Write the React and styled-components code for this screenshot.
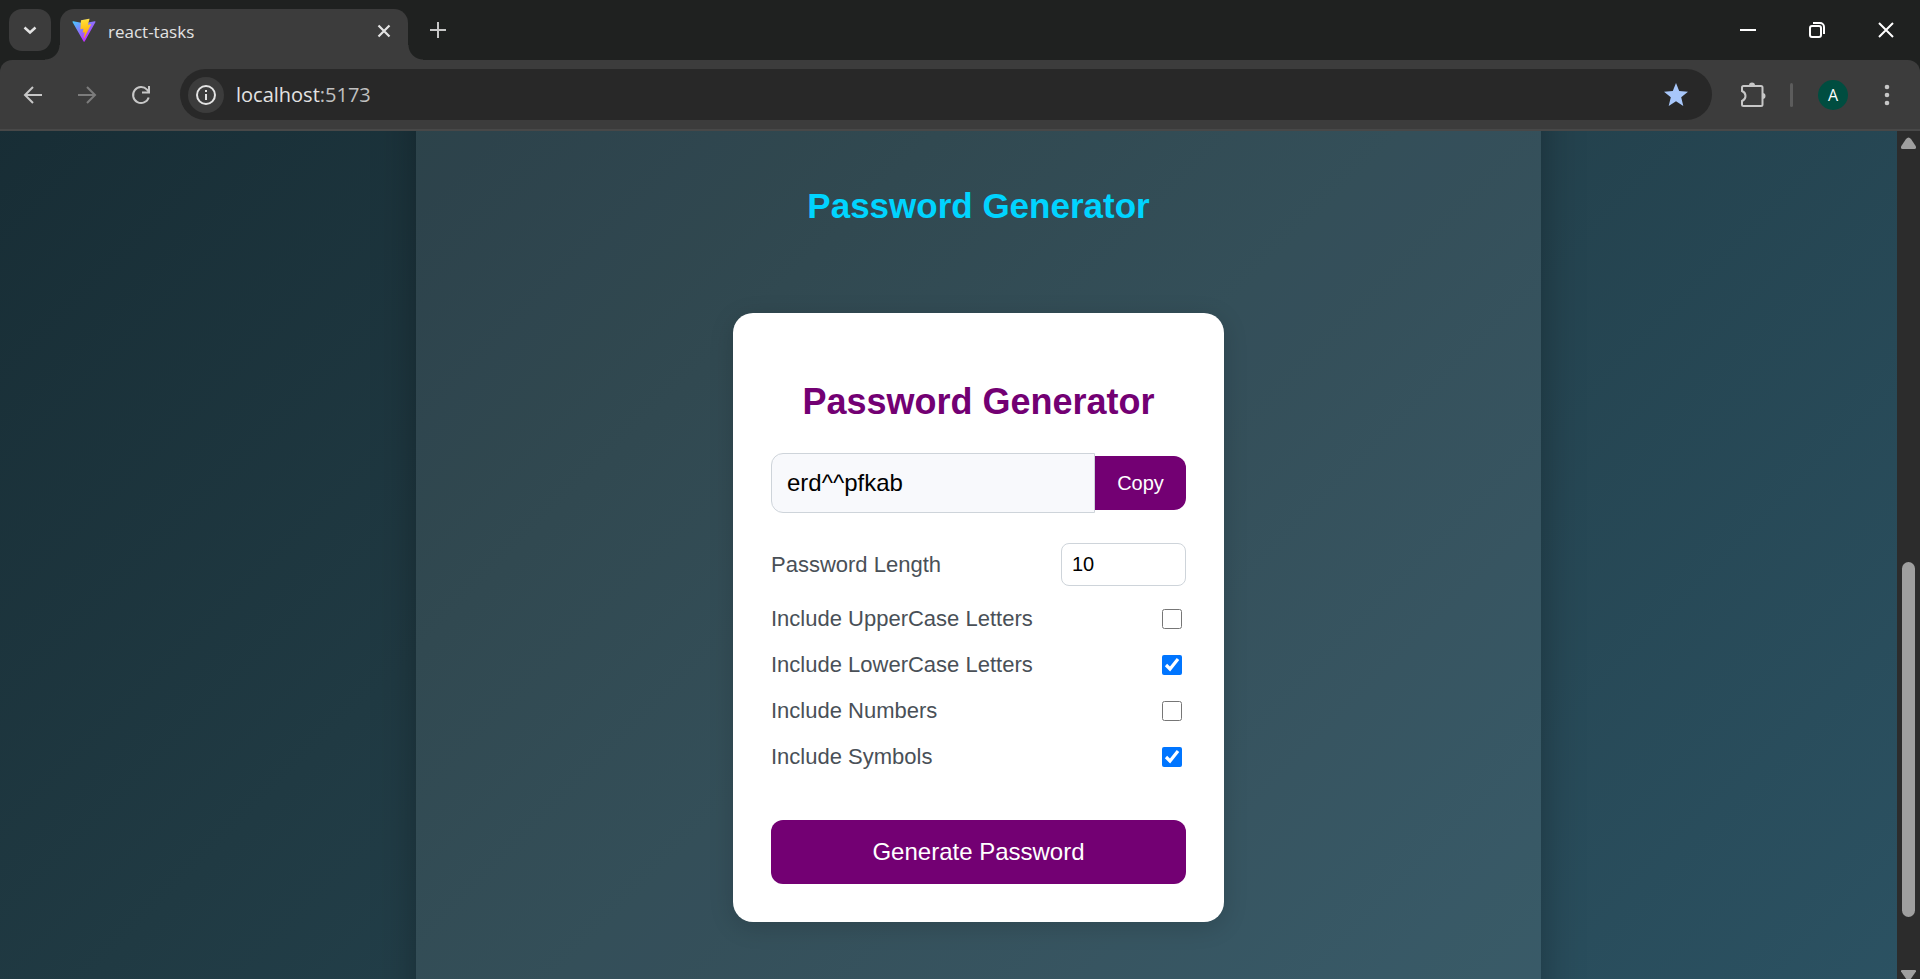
import React, { useState } from "react";
import styled, { createGlobalStyle } from "styled-components";

const GlobalStyle = createGlobalStyle`
  *, *::before, *::after { box-sizing: border-box; }
  body { margin: 0; background: #1f2120; }
  button, input { font-family: inherit; margin: 0; }
`;

const Browser = styled.div`
  display: flex;
  flex-direction: column;
  height: 100vh;
  overflow: hidden;
  background: #1f2120;
  font-family: "Open Sans", "Noto Sans", sans-serif;
`;

/* ---------- title bar ---------- */

const TitleBar = styled.header`
  display: flex;
  flex: none;
  height: 60px;
  padding: 9px 0 0 9px;
`;

const IconButton = styled.button`
  display: flex;
  align-items: center;
  justify-content: center;
  flex: none;
  width: ${(p) => p.$size}px;
  height: ${(p) => p.$size}px;
  padding: 0;
  border: 0;
  border-radius: ${(p) => p.$radius ?? 50}px;
  background: ${(p) => p.$fill ?? "transparent"};
  color: ${(p) => p.$color ?? "#c7c7c7"};
`;

const Tab = styled.div`
  position: relative;
  display: flex;
  align-items: center;
  width: 348px;
  margin: 0 9px;
  padding: 0 8px 8px 12px;
  border-radius: 14px 14px 0 0;
  background: #3c3c3c;

  &::before,
  &::after {
    content: "";
    position: absolute;
    bottom: 0;
    width: 15px;
    height: 15px;
  }
  &::before {
    right: 100%;
    background: radial-gradient(circle at 0 0, transparent 14px, #3c3c3c 15px);
  }
  &::after {
    left: 100%;
    background: radial-gradient(circle at 100% 0, transparent 14px, #3c3c3c 15px);
  }
`;

const TabTitle = styled.span`
  flex: 1;
  margin-left: 12px;
  padding-top: 2px;
  color: #e3e3e3;
  font-size: 17px;
  line-height: 24px;
`;

const WindowControls = styled.div`
  display: flex;
  margin-left: auto;
`;

const WindowButton = styled.button`
  display: flex;
  align-items: center;
  justify-content: center;
  width: 69px;
  height: 42px;
  padding: 0;
  border: 0;
  background: transparent;
  color: #fff;
`;

/* ---------- toolbar ---------- */

const Toolbar = styled.nav`
  display: flex;
  align-items: center;
  flex: none;
  height: 71px;
  padding: 0 12px;
  border-bottom: 2px solid #484848;
  border-radius: 12px 12px 0 0;
  background: #3c3c3c;
`;

const NavButtons = styled.div`
  display: flex;
  gap: 12px;
  margin-right: 18px;
`;

const Omnibox = styled.div`
  display: flex;
  align-items: center;
  flex: 1;
  height: 51px;
  padding: 0 18px 0 8px;
  border-radius: 26px;
  background: #282828;
`;

const Address = styled.div`
  flex: 1;
  margin-left: 12px;
  color: #e3e3e3;
  font-size: 20px;
  line-height: 28px;

  span { color: #c0c0c0; }
`;

const ToolbarEnd = styled.div`
  display: flex;
  align-items: center;
  margin-left: 20px;
`;

const Divider = styled.span`
  width: 3px;
  height: 24px;
  margin: 0 25px 0 16px;
  border-radius: 2px;
  background: #5c5c5c;
`;

const Avatar = styled.button`
  width: 30px;
  height: 30px;
  margin-right: 18px;
  padding: 0;
  border: 0;
  border-radius: 50%;
  background: #004d40;
  color: #fff;
  font-size: 16px;
  line-height: 30px;
`;

/* ---------- page ---------- */

const Viewport = styled.div`
  display: flex;
  flex: 1;
  min-height: 0;
`;

const Page = styled.main`
  flex: 1;
  padding-left: 60px;
  overflow: hidden;
  background: linear-gradient(135deg, #0f2027, #203a43, #2c5364) 0 -980px / 100% 1945px;
  font-family: "Liberation Sans", Arial, sans-serif;
`;

const Panel = styled.section`
  display: flex;
  flex-direction: column;
  align-items: center;
  max-width: 1125px;
  min-height: calc(100% + 128px);
  margin: -64px auto;
  padding: 119px 20px 64px;
  background: rgba(255, 255, 255, 0.08);
  box-shadow: 0 10px 40px rgba(0, 0, 0, 0.3);
`;

const SectionTitle = styled.h1`
  margin: 0 0 87px;
  color: #00d4ff;
  font-size: 35px;
  line-height: 40px;
`;

const Card = styled.form`
  width: 100%;
  max-width: 491px;
  padding: 38px;
  border-radius: 20px;
  background: #fff;
  box-shadow: 0 5px 25px rgba(0, 0, 0, 0.15);
`;

const CardTitle = styled.h2`
  margin: 30px 0;
  color: #730073;
  font-size: 36px;
  line-height: 42px;
  text-align: center;
`;

const PasswordRow = styled.div`
  display: flex;
  align-items: center;
  margin-bottom: 30px;
`;

const PasswordField = styled.input`
  flex: 1;
  min-width: 0;
  height: 60px;
  padding: 0 15px;
  border: 1px solid #ced4da;
  border-radius: 12px 0 0 12px;
  background: #f8f9fc;
  color: #000;
  font-size: 24px;
`;

const ActionButton = styled.button`
  border: 0;
  background: #730073;
  color: #fff;
`;

const CopyButton = styled(ActionButton)`
  width: 91px;
  height: 54px;
  border-radius: 0 12px 12px 0;
  font-size: 20px;
`;

const GenerateButton = styled(ActionButton)`
  width: 100%;
  height: 64px;
  border-radius: 12px;
  font-size: 24px;
`;

const Options = styled.div`
  display: flex;
  flex-direction: column;
  gap: 20px;
  margin-bottom: 50px;
`;

const Option = styled.label`
  display: flex;
  align-items: center;
  justify-content: space-between;
  color: #495057;
  font-size: 22px;
  line-height: 26px;
`;

const LengthField = styled.input`
  width: 125px;
  height: 43px;
  padding: 0 10px;
  border: 1px solid #ced4da;
  border-radius: 8px;
  background: #fff;
  color: #000;
  font-size: 20px;
`;

const Checkbox = styled.input`
  && {
    width: 20px;
    height: 20px;
    margin: 0 4px;
  }
`;

/* ---------- scrollbar ---------- */

const Scrollbar = styled.div`
  display: flex;
  flex-direction: column;
  align-items: center;
  flex: none;
  width: 23px;
  padding-top: 6px;
  background: #2c2c2c;
  color: #9f9f9f;

  svg { flex: none; }
`;

const Track = styled.div`
  display: flex;
  flex-direction: column;
  flex: 1;
  width: 13px;
`;

const TrackSpace = styled.div`
  flex: ${(p) => p.$share} 0 0;
`;

const Thumb = styled.div`
  flex: 355 0 0;
  border-radius: 7px;
  background: #9f9f9f;
`;

/* ---------- icons ---------- */

const Icon = ({ size = 24, width = 2, cap = "butt", children }) => (
  <svg
    width={size}
    height={size}
    viewBox={`0 0 ${size} ${size}`}
    fill="none"
    stroke="currentColor"
    strokeWidth={width}
    strokeLinecap={cap}
    aria-hidden="true"
  >
    {children}
  </svg>
);

const ViteLogo = () => (
  <svg width="24" height="25" viewBox="0 0 410 404" aria-hidden="true">
    <defs>
      <linearGradient id="viteBody" x1="6" y1="33" x2="235" y2="344" gradientUnits="userSpaceOnUse">
        <stop stopColor="#41D1FF" />
        <stop offset="1" stopColor="#BD34FE" />
      </linearGradient>
      <linearGradient id="viteBolt" x1="194" y1="9" x2="236" y2="293" gradientUnits="userSpaceOnUse">
        <stop stopColor="#FFEA83" />
        <stop offset="0.083" stopColor="#FFDD35" />
        <stop offset="1" stopColor="#FFA800" />
      </linearGradient>
    </defs>
    <path
      d="M399.641 59.5246L215.643 388.545C211.844 395.338 202.084 395.378 198.228 388.618L10.5817 59.5563C6.38087 52.1896 12.6802 43.2665 21.0281 44.7586L205.223 77.6824C206.398 77.8924 207.601 77.8904 208.776 77.6763L389.119 44.8058C397.439 43.2894 403.768 52.1434 399.641 59.5246Z"
      fill="url(#viteBody)"
    />
    <path
      d="M292.965 1.5744L156.801 28.2552C154.563 28.6937 152.906 30.5903 152.771 32.8664L144.395 174.33C144.198 177.662 147.258 180.248 150.51 179.498L188.42 170.749C191.967 169.931 195.172 173.055 194.443 176.622L183.18 231.775C182.422 235.487 185.907 238.661 189.532 237.56L212.947 230.446C216.577 229.344 220.065 232.527 219.297 236.242L201.398 322.875C200.278 328.294 207.486 331.249 210.492 326.603L212.5 323.5L323.454 102.072C325.312 98.3645 322.108 94.137 318.036 94.9228L279.014 102.454C275.347 103.161 272.227 99.746 273.262 96.1583L298.731 7.86689C299.767 4.27314 296.636 0.855181 292.965 1.5744Z"
      fill="url(#viteBolt)"
    />
  </svg>
);

const CHOICES = [
  { key: "upper", label: "Include UpperCase Letters", chars: "ABCDEFGHIJKLMNOPQRSTUVWXYZ" },
  { key: "lower", label: "Include LowerCase Letters", chars: "abcdefghijklmnopqrstuvwxyz" },
  { key: "numbers", label: "Include Numbers", chars: "0123456789" },
  { key: "symbols", label: "Include Symbols", chars: "!@#$%^&*()_+" },
];

function PasswordGenerator() {
  const [password, setPassword] = useState("erd^^pfkab");
  const [length, setLength] = useState(10);
  const [enabled, setEnabled] = useState({ upper: false, lower: true, numbers: false, symbols: true });

  const generate = (event) => {
    event.preventDefault();
    const pool = CHOICES.filter((c) => enabled[c.key]).map((c) => c.chars).join("");
    if (!pool) return;
    setPassword(
      Array.from({ length: Number(length) }, () => pool[Math.floor(Math.random() * pool.length)]).join("")
    );
  };

  return (
    <Card onSubmit={generate}>
      <CardTitle>Password Generator</CardTitle>
      <PasswordRow>
        <PasswordField type="text" readOnly value={password} aria-label="Generated password" />
        <CopyButton type="button" onClick={() => navigator.clipboard?.writeText(password)}>
          Copy
        </CopyButton>
      </PasswordRow>
      <Options>
        <Option>
          Password Length
          <LengthField type="number" value={length} onChange={(e) => setLength(e.target.value)} />
        </Option>
        {CHOICES.map(({ key, label }) => (
          <Option key={key}>
            {label}
            <Checkbox
              type="checkbox"
              checked={enabled[key]}
              onChange={(e) => setEnabled({ ...enabled, [key]: e.target.checked })}
            />
          </Option>
        ))}
      </Options>
      <GenerateButton type="submit">Generate Password</GenerateButton>
    </Card>
  );
}

export default function App() {
  return (
    <Browser>
      <GlobalStyle />
      <TitleBar>
        <IconButton $size={42} $radius={13} $fill="#3c3c3c" $color="#e3e3e3" aria-label="Search tabs">
          <Icon size={14} width={2.5}>
            <path d="M1.500 4.500l5.500 5 5.500-5" />
          </Icon>
        </IconButton>
        <Tab>
          <ViteLogo />
          <TabTitle>react-tasks</TabTitle>
          <IconButton $size={32} $color="#e3e3e3" aria-label="Close tab">
            <Icon size={14} width={2.2}>
              <path d="M1.500 1.500l11 11M12.500 1.500l-11 11" />
            </Icon>
          </IconButton>
        </Tab>
        <IconButton $size={42} aria-label="New tab">
          <Icon size={16}>
            <path d="M8 0v16M0 8h16" />
          </Icon>
        </IconButton>
        <WindowControls>
          <WindowButton aria-label="Minimize">
            <Icon size={16}>
              <path d="M0 8h16" />
            </Icon>
          </WindowButton>
          <WindowButton aria-label="Restore">
            <Icon size={16}>
              <rect x="1" y="4" width="11" height="11" rx="2" />
              <path d="M4 1h7a4 4 0 0 1 4 4v7" />
            </Icon>
          </WindowButton>
          <WindowButton aria-label="Close">
            <Icon size={16}>
              <path d="M1 1l14 14M15 1L1 15" />
            </Icon>
          </WindowButton>
        </WindowControls>
      </TitleBar>

      <Toolbar>
        <NavButtons>
          <IconButton $size={42} aria-label="Back">
            <Icon size={20}>
              <path d="M19 10H3M10 2l-8 8 8 8" />
            </Icon>
          </IconButton>
          <IconButton $size={42} $color="#7c7c7c" aria-label="Forward">
            <Icon size={20}>
              <path d="M1 10h16M10 2l8 8-8 8" />
            </Icon>
          </IconButton>
          <IconButton $size={42} aria-label="Reload">
            <Icon size={20}>
              <path d="M17.700 12.500A8 8 0 1 1 16 4.600L18 7" />
              <path d="M18 1v6.500h-7" />
            </Icon>
          </IconButton>
        </NavButtons>
        <Omnibox>
          <IconButton $size={36} $fill="#3c3c3c" $color="#e3e3e3" aria-label="Site information">
            <Icon size={20}>
              <circle cx="10" cy="10" r="9" />
              <path d="M10 9v6M10 5v2" />
            </Icon>
          </IconButton>
          <Address>
            localhost<span>:5173</span>
          </Address>
          <IconButton $size={36} $color="#a8c7fa" aria-label="Bookmark">
            <svg width="24" height="24" viewBox="0 0 24 24" fill="currentColor" aria-hidden="true">
              <path d="M12 0l3.200 8.100 8.800.6-6.800 5.600L19.300 23 12 18.200 4.700 23l2.100-8.700L0 8.700l8.800-.6z" />
            </svg>
          </IconButton>
        </Omnibox>
        <ToolbarEnd>
          <IconButton $size={42} aria-label="Extensions">
            <svg width="26" height="26" viewBox="0 0 26 26" fill="none" aria-hidden="true">
              <path
                d="M3.500 4H21a1.500 1.500 0 0 1 1.500 1.500v17A1.500 1.500 0 0 1 21 24H3.500A1.500 1.500 0 0 1 2 22.500V19q3.500-1.500 3.500-5T2 9V5.500A1.500 1.500 0 0 1 3.500 4z"
                stroke="currentColor"
                strokeWidth="2"
              />
              <path d="M9 3.500a3 3 0 0 1 6 0zM22.500 11a3 3 0 0 1 0 6z" fill="currentColor" />
            </svg>
          </IconButton>
          <Divider />
          <Avatar aria-label="Profile">A</Avatar>
          <IconButton $size={42} aria-label="Menu">
            <svg width="6" height="22" viewBox="0 0 6 22" fill="currentColor" aria-hidden="true">
              <circle cx="3" cy="3" r="2.300" />
              <circle cx="3" cy="11" r="2.300" />
              <circle cx="3" cy="19" r="2.300" />
            </svg>
          </IconButton>
        </ToolbarEnd>
      </Toolbar>

      <Viewport>
        <Page>
          <Panel>
            <SectionTitle>Password Generator</SectionTitle>
            <PasswordGenerator />
          </Panel>
        </Page>
        <Scrollbar aria-hidden="true">
          <svg width="15" height="14" viewBox="0 0 15 14" fill="currentColor">
            <path d="M5 2q2.500-3 5 0l5 7.500q.5 2.500-1.500 2.500h-12Q-.5 12 0 9.500z" />
          </svg>
          <Track>
            <TrackSpace $share={411} />
            <Thumb />
            <TrackSpace $share={53} />
          </Track>
          <svg width="15" height="9" viewBox="0 0 15 9" fill="currentColor">
            <path d="M1 0h13q1.500 0 1 1.500L9 10H6L0 1.500Q-.5 0 1 0z" />
          </svg>
        </Scrollbar>
      </Viewport>
    </Browser>
  );
}
